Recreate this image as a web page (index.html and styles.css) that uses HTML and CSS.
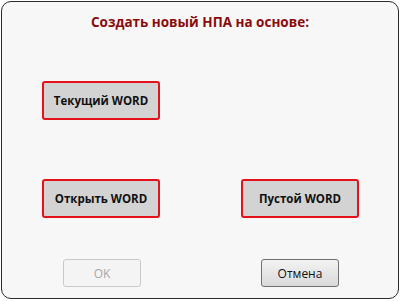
FILE: index.html
```html
<!DOCTYPE html>
<html lang="ru">

<head>
    <meta charset="UTF-8">
    <title>Создать новый НПА</title>
    <link rel="stylesheet" href="styles.css">
</head>

<body>
    <div class="dialog">
        <h4 class="title">Создать новый НПА на основе:</h4>

        <div class="row first">
            <button class="choice">Текущий WORD</button>
        </div>

        <div class="row second">
            <button class="choice">Открыть WORD</button>
            <button class="choice">Пустой WORD</button>
        </div>

        <div class="footer">
            <button class="plain" disabled>OK</button>
            <button class="plain">Отмена</button>
        </div>
    </div>
</body>

</html>
```

FILE: styles.css
```css
* {
    margin: 0;
    box-sizing: border-box;
}

html,
body {
    width: 402px;
    height: 301px;
    background: #fff;
}

body {
    padding: 1px;
    font-family: "Open Sans", "Noto Sans", sans-serif;
}

.dialog {
    width: 398px;
    height: 298px;
    background: #f7f7f7;
    border: 1px solid #2b2b2b;
    border-radius: 10px;
    display: flex;
    flex-direction: column;
}

.title {
    margin-top: 10px;
    text-align: center;
    font-size: 13.5px;
    line-height: 20px;
    font-weight: 700;
    color: #8a0b0b;
}

.row {
    display: flex;
    gap: 81px;
    padding-left: 40px;
}

.row.first {
    margin-top: 49px;
}

.row.second {
    margin-top: 59px;
}

.choice {
    width: 118px;
    height: 39px;
    background: #d3d3d3;
    border: 2px solid #e5121c;
    border-radius: 3px;
    font-family: inherit;
    font-size: 11.5px;
    font-weight: 700;
    color: #111;
}

.footer {
    display: flex;
    gap: 120px;
    padding-left: 61px;
    margin-top: 41px;
}

.plain {
    width: 78px;
    height: 28px;
    background: linear-gradient(#f3f3f3, #e6e6e6 50%, #dadada);
    border: 1px solid #707070;
    border-radius: 3px;
    font-family: inherit;
    font-size: 12px;
    color: #111;
}

.plain:disabled {
    background: #f4f4f4;
    border-color: #c9c9c9;
    color: #a6a6a6;
}
```
